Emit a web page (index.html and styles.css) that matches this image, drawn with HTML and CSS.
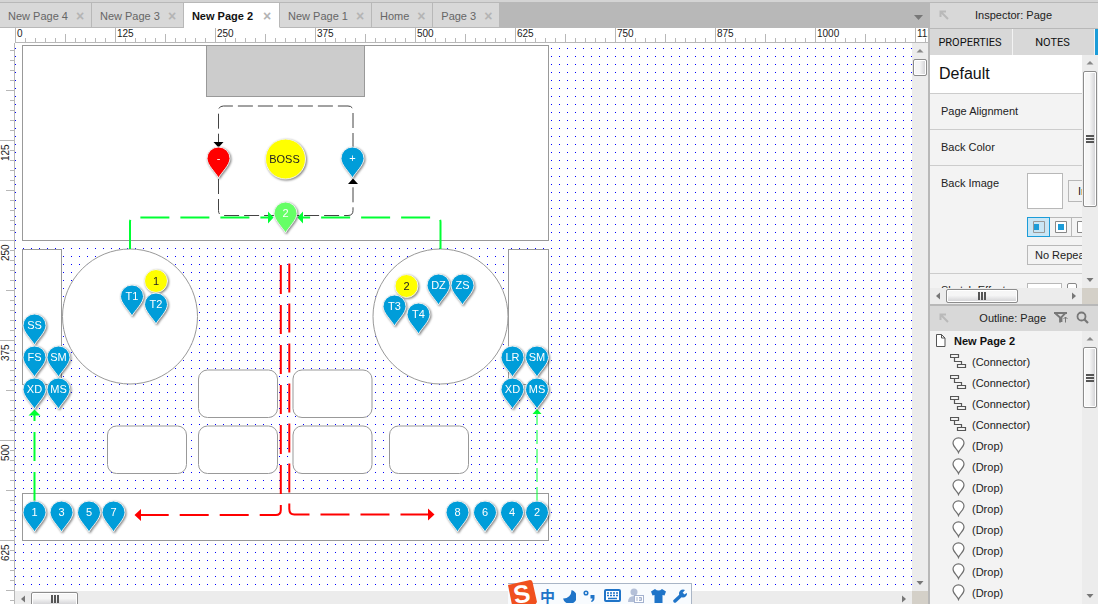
FILE: index.html
```html
<!DOCTYPE html>
<html lang="en">
<head>
<meta charset="utf-8">
<title>New Page 2</title>
<link rel="stylesheet" href="styles.css">
<script src="app.js" defer></script>
</head>
<body>
<svg class="defs" width="0" height="0" aria-hidden="true">
  <defs>
    <symbol id="i-pointer" viewBox="0 0 10 10"><path d="M1.500 7V1.500H7M2 2l7 7" fill="none" stroke="#b9b9b9" stroke-width="2"/></symbol>
    <symbol id="i-connector" viewBox="0 0 17 15"><path d="M.5.500h8v3h-8zM4.500 3.500v4h7v3M7.500 10.500h8v3h-8z" fill="none" stroke="#555" stroke-width="1.200"/></symbol>
    <symbol id="i-drop" viewBox="0 0 13 17"><path d="M6.500 15.500C5.500 12.500 1 10 1 6a5.500 5.200 0 0 1 11 0c0 4-4.500 6.500-5.500 9.500z" fill="#fff" stroke="#707070" stroke-width="1.200"/></symbol>
    <symbol id="i-page" viewBox="0 0 10 13"><path d="M.5.500h5l3.500 3.500v8.500H.5zM5.500.5v3.500H9" fill="#fff" stroke="#555"/></symbol>
    <symbol id="i-up" viewBox="0 0 16 16"><path d="M4.500 9.500 8 6l3.500 3.500z" fill="#888"/></symbol>
    <symbol id="i-down" viewBox="0 0 16 16"><path d="M4.500 6h7L8 10z" fill="#777"/></symbol>
    <symbol id="i-left" viewBox="0 0 16 16"><path d="M10 4.500v7L6 8z" fill="#777"/></symbol>
    <symbol id="i-right" viewBox="0 0 16 16"><path d="M6 4.500v7L10 8z" fill="#777"/></symbol>
  </defs>
</svg>

<main class="editor">
  <div class="tabs" role="tablist">
    <button class="tab" role="tab">New Page 4<span class="close">×</span></button>
    <button class="tab" role="tab">New Page 3<span class="close">×</span></button>
    <button class="tab active" role="tab" aria-selected="true">New Page 2<span class="close">×</span></button>
    <button class="tab" role="tab">New Page 1<span class="close">×</span></button>
    <button class="tab" role="tab">Home<span class="close">×</span></button>
    <button class="tab" role="tab">Page 3<span class="close">×</span></button>
    <button class="tab-menu" aria-label="All pages"><svg width="10" height="6"><path d="M0 0h9L4.500 5z" fill="#777"/></svg></button>
  </div>

  <div class="corner"></div>
  <svg class="ruler-top">
    <defs><pattern id="ticks-x" width="100" height="15" patternUnits="userSpaceOnUse">
      <path d="M.5 0v15M50.500 6v9M10.500 10v5M20.500 10v5M30.500 10v5M40.500 10v5M60.500 10v5M70.500 10v5M80.500 10v5M90.500 10v5M0 14.500h100" stroke="#b8b8b8"/>
    </pattern></defs>
    <rect width="100%" height="15" fill="url(#ticks-x)"/>
    <g class="ruler-text">
      <text x="2" y="9">0</text><text x="102" y="9">125</text><text x="202" y="9">250</text>
      <text x="302" y="9">375</text><text x="402" y="9">500</text><text x="502" y="9">625</text>
      <text x="602" y="9">750</text><text x="702" y="9">875</text><text x="802" y="9">1000</text>
      <text x="902" y="9">1125</text>
    </g>
  </svg>

  <svg class="ruler-left">
    <defs><pattern id="ticks-y" y="-3" width="15" height="100" patternUnits="userSpaceOnUse">
      <path d="M0 .5h15M6 50.500h9M10 10.500h5M10 20.500h5M10 30.500h5M10 40.500h5M10 60.500h5M10 70.500h5M10 80.500h5M10 90.500h5M14.500 0v100" stroke="#b8b8b8"/>
    </pattern></defs>
    <rect width="15" height="100%" fill="url(#ticks-y)"/>
    <g class="ruler-text">
      <text transform="translate(9 118) rotate(-90)">125</text>
      <text transform="translate(9 218) rotate(-90)">250</text>
      <text transform="translate(9 318) rotate(-90)">375</text>
      <text transform="translate(9 418) rotate(-90)">500</text>
      <text transform="translate(9 518) rotate(-90)">625</text>
    </g>
  </svg>

  <svg class="canvas">
    <defs>
      <pattern id="dots" x="15" y="48" width="8" height="8" patternUnits="userSpaceOnUse"><rect width="1" height="1" fill="#00f"/></pattern>
      <path id="pin" d="M0 31C-2.500 26-11.500 18-11.500 11.500a11.500 11.500 0 0 1 23 0C11.500 18 2.500 26 0 31z"/>
    </defs>
    <g transform="translate(-15 -43)">
      <rect x="15" y="43" width="100%" height="100%" fill="url(#dots)"/>
      <g class="shape">
        <rect x="22.500" y="45.500" width="526" height="195"/>
        <rect class="screen" x="206.500" y="45.500" width="158" height="51"/>
        <rect x="22.500" y="249.500" width="39" height="135"/>
        <rect x="508.500" y="249.500" width="40" height="135"/>
        <circle cx="130" cy="316.500" r="67.500"/>
        <circle cx="440.500" cy="316.500" r="67.500"/>
        <rect x="198.500" y="370" width="79" height="47.500" rx="9"/>
        <rect x="293" y="370" width="79" height="47.500" rx="9"/>
        <rect x="107.500" y="426" width="79" height="47.500" rx="9"/>
        <rect x="198.500" y="426" width="79" height="47.500" rx="9"/>
        <rect x="293" y="426" width="79" height="47.500" rx="9"/>
        <rect x="389.500" y="426" width="79" height="47.500" rx="9"/>
        <rect x="22.500" y="493.500" width="526" height="47"/>
      </g>

      <g class="line black">
        <path d="M353 148v-37q0-5-5-5H223.500q-5 0-5 5v32"/>
        <path d="M218.500 179v31.500q0 5 5 5H348q5 0 5-5V183"/>
        <path class="tip" d="M213.500 142h10l-5 5.500zM348 184h10l-5-5.500z"/>
      </g>
      <g class="line green">
        <path d="M130 249v-27q0-4.500 4.500-4.500H269"/>
        <path d="M440.500 249v-27q0-4.500-4.500-4.500H302"/>
        <path d="M34.500 501v-86"/>
        <path class="thin" d="M537 501v-88"/>
        <path class="tip" d="M268 211.500v12l5.500-6zM303 211.500v12l-5.500-6zM28.500 415.500h12l-6-6zM532.500 414h9l-4.500-5z"/>
      </g>
      <g class="line red">
        <path d="M280.800 265v245q0 5-5 5H141"/>
        <path d="M289.300 263.500V509q0 5.500 5 5.500H428"/>
        <path class="tip" d="M141 509v12l-6.500-6zM428 508.500v12l6.500-6z"/>
      </g>

      <g class="node seat"><circle cx="285.500" cy="159" r="20"/><text x="284.500" y="163">BOSS</text></g>
      <g class="node seat"><circle cx="156" cy="281" r="11.500"/><text x="156" y="285">1</text></g>
      <g class="node seat"><circle cx="406.500" cy="286" r="11.500"/><text x="406.500" y="290">2</text></g>
      <g id="pins"></g>
    </g>
  </svg>

  <div class="scroll vertical">
    <svg width="16" height="16"><use href="#i-up"/></svg><div class="thumb page-y"></div><svg class="end" width="16" height="16"><use href="#i-down"/></svg>
  </div>
  <div class="scroll horizontal">
    <svg width="16" height="16"><use href="#i-left"/></svg><div class="thumb page-x grip"></div><svg class="end" width="16" height="16"><use href="#i-right"/></svg>
  </div>
  <div class="scroll-corner"></div>
</main>

<aside class="sidebar">
  <section class="inspector">
    <header class="panel-head"><svg width="10" height="10"><use href="#i-pointer"/></svg><h2>Inspector: Page</h2></header>
    <div class="modes" role="tablist">
      <button role="tab">PROPERTIES</button><button role="tab">NOTES</button><button class="accent" role="tab" aria-label="Style"></button>
    </div>
    <div class="panel-body">
      <div class="fields">
        <h3>Default</h3>
        <div class="field"><span>Page Alignment</span></div>
        <div class="field"><span>Back Color</span></div>
        <div class="field tall">
          <span>Back Image</span>
          <div class="controls">
            <div class="line-row"><div class="preview"></div><button class="import">Import</button></div>
            <div class="aligns">
              <button class="on" aria-label="Left"><svg width="12" height="12"><path d="M.5.500h11v11H.5z" fill="none" stroke="#999"/><path d="M1 3h5v6H1z" fill="#1b9cd8"/></svg></button>
              <button aria-label="Center"><svg width="12" height="12"><path d="M.5.500h11v11H.5z" fill="#fff" stroke="#888"/><path d="M3 3h6v6H3z" fill="#1b9cd8"/></svg></button>
              <button aria-label="Right"><svg width="12" height="12"><path d="M.5.500h11v11H.5z" fill="#fff" stroke="#888"/><path d="M6 3h5v6H6z" fill="#1b9cd8"/></svg></button>
            </div>
            <select aria-label="Repeat"><option>No Repeat</option></select>
          </div>
        </div>
        <div class="field sketch">
          <label for="sketch">Sketch Effects</label>
          <div class="controls line-row"><input id="sketch" type="text"><button class="knob" aria-label="Sketch amount"></button></div>
        </div>
      </div>
      <div class="scroll vertical">
        <svg width="16" height="16"><use href="#i-up"/></svg><div class="thumb fields-y grip"></div><svg class="end" width="16" height="16"><use href="#i-down"/></svg>
      </div>
      <div class="scroll horizontal">
        <svg width="16" height="16"><use href="#i-left"/></svg><div class="thumb fields-x grip"></div><svg class="end" width="16" height="16"><use href="#i-right"/></svg>
      </div>
      <div class="scroll-corner"></div>
    </div>
  </section>

  <section class="outline">
    <header class="panel-head"><svg width="10" height="10"><use href="#i-pointer"/></svg><h2>Outline: Page</h2>
      <svg width="14" height="11"><path d="M0 1h13M1.500 1.500l4.500 4v5M11 1.500 7.500 5v5" fill="none" stroke="#777" stroke-width="1.800"/><path d="M11.500 10.500V5M9.500 7l2-2 2 2" fill="none" stroke="#777"/></svg>
      <svg width="13" height="13"><circle cx="5.500" cy="5.500" r="4" fill="none" stroke="#777" stroke-width="1.800"/><path d="m8.500 8.500 3.500 3.500" stroke="#777" stroke-width="2.200"/></svg>
    </header>
    <div class="outline-body">
      <ul class="tree">
        <li class="root"><svg width="10" height="13"><use href="#i-page"/></svg>New Page 2</li>
        <li><svg width="17" height="15"><use href="#i-connector"/></svg>(Connector)</li>
        <li><svg width="17" height="15"><use href="#i-connector"/></svg>(Connector)</li>
        <li><svg width="17" height="15"><use href="#i-connector"/></svg>(Connector)</li>
        <li><svg width="17" height="15"><use href="#i-connector"/></svg>(Connector)</li>
        <li><svg width="17" height="17"><use href="#i-drop"/></svg>(Drop)</li>
        <li><svg width="17" height="17"><use href="#i-drop"/></svg>(Drop)</li>
        <li><svg width="17" height="17"><use href="#i-drop"/></svg>(Drop)</li>
        <li><svg width="17" height="17"><use href="#i-drop"/></svg>(Drop)</li>
        <li><svg width="17" height="17"><use href="#i-drop"/></svg>(Drop)</li>
        <li><svg width="17" height="17"><use href="#i-drop"/></svg>(Drop)</li>
        <li><svg width="17" height="17"><use href="#i-drop"/></svg>(Drop)</li>
        <li><svg width="17" height="17"><use href="#i-drop"/></svg>(Drop)</li>
      </ul>
      <div class="scroll vertical">
        <svg width="16" height="16"><use href="#i-up"/></svg><div class="thumb tree-y grip"></div><svg class="end" width="16" height="16"><use href="#i-down"/></svg>
      </div>
    </div>
  </section>
</aside>

<div class="ime">
  <svg class="ime-logo" width="30" height="26" viewBox="0 0 30 26"><path d="M0 6 22 1q2 0 2.500 2L29 23l-2 3H4z" fill="#f0501e"/><text class="ime-s" transform="translate(7 25) rotate(-10)">S</text></svg>
  <span class="ime-lang">中</span>
  <svg width="14" height="14"><path d="M9.500 1A7 7 0 1 1 1 9.500 8 8 0 0 0 9.500 1z" fill="#1f74c8"/></svg>
  <svg width="14" height="14"><circle cx="3" cy="4" r="1.800" fill="none" stroke="#1f74c8" stroke-width="1.500"/><path d="M7.500 6h4v3q0 3-3 4l-.5-1q1.500-1 1.500-2.500h-2z" fill="#1f74c8"/></svg>
  <svg width="17" height="13"><rect x="1" y="1" width="15" height="11" rx="1" fill="#fff" stroke="#1f74c8" stroke-width="2"/><path d="M3 4h11M3 6.500h11" stroke="#1f74c8" stroke-width="1.500" stroke-dasharray="2 1"/><path d="M4 9.500h9" stroke="#1f74c8" stroke-width="1.500"/></svg>
  <svg width="16" height="15"><circle cx="6" cy="4" r="3.500" fill="#b4c0d8"/><path d="M0 14q0-6 6-6h3v6z" fill="#b4c0d8"/><rect x="6.500" y="7.500" width="9" height="7" fill="#fff" stroke="#a4b2cf"/><path d="M9 9v4M11 9.500h2.500v3H11M11 11h2" fill="none" stroke="#a4b2cf"/></svg>
  <svg width="15" height="14"><path d="M4 0q3.500 3 7 0l4 2.500-1.500 4-2-.5v8h-8V6l-2 .5L0 2.500z" fill="#1f74c8"/></svg>
  <svg width="15" height="14"><path d="M2 12 9 5.500" stroke="#1f74c8" stroke-width="3.500" stroke-linecap="round"/><path d="M12 1a4 4 0 1 0 2 3l-3 1.500L9.500 4z" fill="#1f74c8"/></svg>
</div>
</body>
</html>
```

FILE: app.js
```js
// Pins on the floor plan: x of the point, y of the top, label, colour class.
const pins = [
  [218.5, 147, "-", "hot"], [352.5, 147, "+"], [285.5, 202, "2", "go"],
  [34.5, 314, "SS"], [34.5, 346, "FS"], [58.5, 346, "SM"], [34.5, 378, "XD"], [58.5, 378, "MS"],
  [132, 285, "T1"], [156, 293, "T2"], [394.5, 295, "T3"], [418.5, 303, "T4"],
  [438.5, 274, "DZ"], [462.5, 274, "ZS"],
  [512.5, 346, "LR"], [537, 346, "SM"], [512.5, 378, "XD"], [537, 378, "MS"],
  [34.5, 501, "1"], [61.5, 501, "3"], [89, 501, "5"], [113.5, 501, "7"],
  [457.5, 501, "8"], [485, 501, "6"], [512, 501, "4"], [537, 501, "2"]
];
document.getElementById("pins").innerHTML = pins.map(([x, y, label, kind = ""]) =>
  `<g class="node pin ${kind}" transform="translate(${x} ${y})"><use href="#pin"/><text y="15">${label}</text></g>`
).join("");
```

FILE: styles.css
```css
* { box-sizing: border-box; }
body {
  margin: 0;
  height: 100vh;
  display: grid;
  grid-template-columns: minmax(0, 1fr) 168px;
  gap: 2px;
  overflow: hidden;
  background: #b8b8b8;
  border-top: 2px solid #d4d4d4;
  padding-top: 1px;
  font: 11px/14px "Liberation Sans", Arial, sans-serif;
  color: #222;
}
button, select, input { font: inherit; color: inherit; margin: 0; padding: 0; border-radius: 0; }
svg { display: block; flex: none; }
.defs { position: absolute; }
h2, h3 { margin: 0; font-weight: normal; }

/* Editor */
.editor {
  display: grid;
  grid-template-columns: 15px minmax(0, 1fr) 16px;
  grid-template-rows: 25px 15px minmax(0, 1fr) 13px;
  min-height: 0;
}
.tabs { grid-column: 1 / -1; display: flex; }
.tab {
  display: flex;
  align-items: center;
  gap: 8px;
  padding: 2px 7px 0 8px;
  border: 0;
  border-right: 1px solid #b8b8b8;
  border-bottom: 1px solid #b8b8b8;
  background: #d8d8d8;
  color: #666;
}
.tab.active { gap: 10px; padding-right: 8px; background: #fff; border-bottom-color: #fff; font-weight: bold; color: #111; }
.close { width: 8px; font-size: 14px; font-weight: bold; color: #b4b4b4; }
.tab-menu { margin-left: auto; padding: 4px 4px 0 0; border: 0; background: none; }
.corner, .ruler-top, .ruler-left, .canvas { background: #fff; }
.ruler-top { grid-column: 2 / -1; width: 100%; height: 15px; }
.ruler-left { grid-column: 1; grid-row: 3 / 5; width: 15px; height: 100%; }
.ruler-text { font-size: 10px; fill: #222; }
.canvas { width: 100%; height: 100%; overflow: hidden; }

.shape { fill: #fff; stroke: #999; }
.screen { fill: #ccc; }
.line { fill: none; }
.black { stroke: #444; stroke-dasharray: 15 5; }
.green { stroke: #00ff33; stroke-width: 2; stroke-dasharray: 29 11; }
.green .thin { stroke-width: 1; stroke-dasharray: 14 5; }
.red { stroke: #f00; stroke-width: 2; stroke-dasharray: 29 11; }
.tip { stroke: none; }
.black .tip { fill: #000; }
.green .tip { fill: #00ff33; }
.red .tip { fill: #f00; }
.node { stroke: #f2f2f2; stroke-width: 1; filter: drop-shadow(1px 1px 1px rgba(0, 0, 0, .5)); }
.node text { stroke: none; text-anchor: middle; font-size: 11px; }
.seat { fill: #ff0; }
.seat text { fill: #222; }
.pin { fill: #009dd9; }
.pin.hot { fill: #f00; }
.pin.go { fill: #6f6; }
.pin text { fill: #fff; }

/* Scrollbars */
.scroll { display: flex; background: #ececec; min-width: 0; min-height: 0; overflow: hidden; }
.vertical { flex-direction: column; }
.thumb { flex: none; display: grid; place-items: center; border: 1px solid #8c8c8c; border-radius: 2px; box-shadow: inset 0 0 0 1px #fff; }
.vertical .thumb { width: 14px; margin-left: 1px; background: linear-gradient(90deg, #f6f6f6 45%, #d0d0d3); }
.horizontal .thumb { height: 14px; margin-top: 1px; background: linear-gradient(#f6f6f6 45%, #d0d0d3); }
.grip::after { content: ""; width: 8px; height: 8px; }
.vertical .grip::after { background: repeating-linear-gradient(#555 0 2px, transparent 2px 3px); }
.horizontal .grip::after { background: repeating-linear-gradient(90deg, #555 0 2px, transparent 2px 3px); }
.scroll .end { margin-top: auto; }
.horizontal .end { margin: 0 0 0 auto; }
.page-y { height: 17px; }
.page-x { width: 47px; }
.fields-y { height: 136px; }
.fields-x { width: 72px; }
.tree-y { height: 61px; }
.scroll-corner { background: #d4d0c8; }
.editor > .horizontal { grid-column: 2; }

/* Sidebar */
.sidebar { display: grid; grid-template-rows: 301fr 298fr; gap: 2px; min-height: 0; }
.inspector, .outline { display: flex; flex-direction: column; min-height: 0; }
.panel-head { flex: none; display: flex; align-items: center; gap: 8px; height: 25px; padding: 0 9px 2px; background: #d8d8d8; }
.panel-head h2 { flex: 1; font-size: 11px; line-height: 14px; text-align: center; }
.outline .panel-head h2 { text-align: right; }
.inspector .panel-head { margin-bottom: 1px; padding-right: 28px; }
.modes { flex: none; display: grid; grid-template-columns: 82px 1fr 3px; gap: 1px; height: 26px; background: #f3f3f3; }
.modes button { padding: 1px 2px 0 0; border: 0; background: #d8d8d8; color: #111; font-family: Roboto, sans-serif; }
.modes .accent { padding: 0; background: #1b9cd8; }
.panel-body { flex: 1; display: grid; grid-template-columns: minmax(0, 1fr) 16px; grid-template-rows: minmax(0, 1fr) 16px; min-height: 0; }
.fields { overflow: hidden; background: #f3f3f3; }
.fields h3 { padding: 8px 9px; border-bottom: 1px solid #ccc; background: #fff; font-size: 16px; line-height: 22px; color: #111; }
.field { display: flex; min-height: 36px; padding: 10px 0 10px 11px; border-bottom: 1px solid #ccc; white-space: nowrap; }
.field > span, .field > label { flex: none; width: 86px; }
.field.tall { padding: 7px 0 8px 11px; }
.field.tall > span { padding-top: 3px; }
.controls { display: flex; flex-direction: column; align-items: flex-start; gap: 8px; }
.line-row { display: flex; flex-direction: row; align-items: center; gap: 5px; }
.preview { width: 36px; height: 36px; border: 1px solid #b8b8b8; background: #fff; }
.import { width: 56px; height: 22px; padding-left: 9px; text-align: left; border: 1px solid #b8b8b8; background: #f3f3f3; }
.aligns { display: flex; }
.aligns button { display: grid; place-items: center; width: 22px; height: 20px; border: 1px solid #b8b8b8; border-left: 0; background: #f3f3f3; }
.aligns .on { width: 23px; border: 1px solid #1b9cd8; background: #c9e6f5; }
select { appearance: none; width: 90px; height: 20px; padding: 0 7px; border: 1px solid #b8b8b8; background: #f3f3f3; }
.field.sketch { padding-top: 9px; }
.sketch input { width: 35px; height: 20px; border: 1px solid #b8b8b8; background: #fff; }
.sketch .line-row { align-items: flex-start; }
.knob { width: 10px; height: 18px; border: 1px solid #888; border-radius: 2px; background: #fff; }

.outline-body { flex: 1; display: grid; grid-template-columns: minmax(0, 1fr) 16px; min-height: 0; }
.tree { margin: 0; padding: 0; list-style: none; overflow: hidden; background: #f3f3f3; }
.tree li { display: flex; align-items: center; gap: 5px; height: 21px; padding: 0 0 2px 20px; }
.tree .root { padding-left: 6px; gap: 8px; font-weight: bold; color: #111; }

/* Input method bar, floating over the window */
.ime {
  position: absolute;
  right: 406px;
  bottom: 0;
  display: flex;
  align-items: center;
  gap: 7px;
  height: 21px;
  padding: 3px 3px 0 32px;
  border: 1px solid #a9b5c6;
  border-width: 1px 1px 0 0;
  background: #f8fbfe;
}
.ime-logo { position: absolute; left: 0; bottom: -1px; }
.ime-s { fill: #fff; font-size: 25px; font-weight: bold; }
.ime-lang { font: bold 15px/16px "Noto Sans CJK SC", sans-serif; color: #1f74c8; }
```
